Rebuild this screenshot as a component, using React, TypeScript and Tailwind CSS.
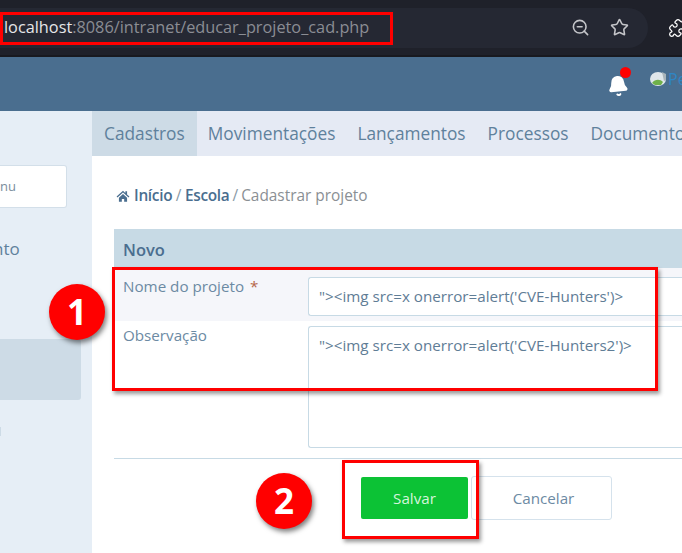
import React from "react";
import { Bell, Star, ZoomOut, Puzzle } from "lucide-react";

const font = { fontFamily: '"Open Sans", sans-serif' };

function Tab({ label, active }: { label: string; active?: boolean }) {
  return (
    <div
      className={`flex h-full items-center text-[17.3px] whitespace-nowrap text-[#5f819c] ${
        active ? "bg-[#cddbe6] px-[12px]" : "px-[11px]"
      }`}
    >
      {label}
    </div>
  );
}

function Marker({ n, className }: { n: string; className: string }) {
  return (
    <div
      className={`absolute flex h-[56px] w-[56px] items-center justify-center rounded-full bg-[#ff0000] text-[35px] font-bold text-white shadow-[2px_3px_5px_rgba(0,0,0,0.5)] ${className}`}
    >
      {n}
    </div>
  );
}

export default function App() {
  return (
    <div className="relative h-[553px] w-[682px] overflow-hidden bg-white" style={font}>
      {/* browser toolbar */}
      <div className="flex h-[57px] items-center border-b-2 border-[#18191f] bg-[#1f212a]">
        <div className="flex h-[40px] w-[648px] shrink-0 items-center justify-between rounded-r-[20px] bg-[#252833] pl-[4px]">
          <div className="text-[16.3px] whitespace-nowrap text-[#8b8d94]">
            <span className="text-[#e6e6e8]">localhost</span>:8086/intranet/educar_projeto_cad.php
          </div>
          <div className="mr-[19px] flex items-center gap-[20px] text-[#c4c5c9]">
            <ZoomOut className="h-[19px] w-[19px]" />
            <Star className="h-[19px] w-[19px]" />
          </div>
        </div>
        <Puzzle className="ml-[20px] h-[20px] w-[20px] shrink-0 text-white" strokeWidth={1.5} />
      </div>

      {/* app header */}
      <div className="flex h-[54px] items-center justify-end bg-[#4a6e8f]">
        <div className="relative mr-[21px] mt-[4px]">
          <Bell className="h-[22px] w-[22px] -rotate-6 fill-white text-white" />
          <span className="absolute -right-[2px] -top-[8px] h-[11px] w-[11px] rounded-full bg-[#ff0000]" />
        </div>
        <div className="mb-[10px] flex w-[32px] shrink-0 items-center overflow-hidden">
          <svg viewBox="0 0 18 17" className="h-[17px] w-[18px] shrink-0">
            <ellipse cx="8" cy="8" rx="8" ry="7" fill="#dfe6ea" />
            <path d="M2 12c3-4 8-4 11-1l-2 3H5Z" fill="#6fb04a" />
            <path d="M12 1l4 2v6l-2 1Z" fill="#a9b4ba" />
          </svg>
          <span className="text-[16px] text-[#2f86c4]">Pe</span>
        </div>
      </div>

      <div className="flex h-[442px]">
        {/* sidebar */}
        <div className="flex w-[92px] shrink-0 flex-col bg-[#e6eef6] text-[#5f819c]">
          <div className="mr-[25px] mt-[54px] flex h-[43px] items-center rounded-r-[3px] border border-l-0 border-[#d3dfe9] bg-white text-[13px] text-[#7a8d9d]">
            nu
          </div>
          <div className="ml-[-7px] mt-[28px] text-[17px]">nto</div>
          <div className="mr-[11px] mt-[77px] h-[61px] rounded-r-[3px] bg-[#cddbe6]" />
          <div className="mt-[27px] h-[9px] w-[1px] bg-[#cddbe6]" />
        </div>

        <div className="min-w-0 flex-1 overflow-hidden">
          {/* tabs */}
          <div className="flex h-[45px] bg-[#e5eaf4]">
            <Tab label="Cadastros" active />
            <Tab label="Movimentações" />
            <Tab label="Lançamentos" />
            <Tab label="Processos" />
            <Tab label="Documentos" />
          </div>

          <div className="pl-[22px]">
            {/* breadcrumb */}
            <div className="mt-[30px] flex h-[20px] items-center text-[15.4px] whitespace-nowrap">
              <svg viewBox="0 0 24 24" className="ml-[2px] mr-[4px] h-[14px] w-[14px] fill-[#4a6e8f]">
                <path d="M12 3 1 13l1.500 1.600L12 6l9.500 8.600L23 13l-4-3.600V4h-3v2.700L12 3Zm-7 12v7h5v-5h4v5h5v-7l-7-6.300L5 15Z" />
              </svg>
              <span className="font-semibold tracking-[-0.3px] text-[#4a6e8f]">Início</span>
              <span className="mx-[3.5px] text-[#8a9aa6]">/</span>
              <span className="font-semibold tracking-[-0.3px] text-[#4a6e8f]">Escola</span>
              <span className="mx-[3px] text-[#8a9aa6]">/</span>
              <span className="text-[#8a8f94]">Cadastrar projeto</span>
            </div>

            {/* form */}
            <div className="mt-[23px] w-[568px]">
              <div className="flex h-[39px] items-center bg-[#c7dae5] pl-[9px] pt-[3px] text-[16.5px] font-semibold text-[#4a6e8f]">
                Novo
              </div>
              <div className="flex h-[53px] bg-[#f5f6fa] pl-[9px]">
                <div className="w-[185px] shrink-0 pt-[7px] text-[15.2px] whitespace-nowrap text-[#6c8aa3]">
                  Nome do projeto <span className="ml-[2px] text-[#b5664a]">*</span>
                </div>
                <div className="mt-[9px] flex h-[39px] flex-1 items-center rounded-l-[3px] border border-r-0 border-[#c7dae5] bg-white pl-[10px] text-[15.2px] whitespace-nowrap text-[#5f7d96]">
                  "&gt;&lt;img src=x onerror=alert('CVE-Hunters')&gt;
                </div>
              </div>
              <div className="flex h-[138px] border-b border-[#c7dae5] pl-[9px]">
                <div className="w-[185px] shrink-0 pt-[3px] text-[15.2px] text-[#6c8aa3]">Observação</div>
                <div className="mt-[5px] h-[122px] flex-1 rounded-l-[3px] border border-r-0 border-[#c7dae5] bg-white pl-[10px] pt-[7px] text-[15.2px] whitespace-nowrap text-[#5f7d96]">
                  "&gt;&lt;img src=x onerror=alert('CVE-Hunters2')&gt;
                </div>
              </div>
            </div>

            {/* actions */}
            <div className="mt-[17px] flex pl-[247px]">
              <div className="mt-[1px] flex h-[42px] w-[107px] items-center justify-center rounded-[2px] bg-[#0cc235] text-[15.2px] text-[#d5f5dc]">
                Salvar
              </div>
              <div className="ml-[3px] flex h-[44px] w-[141px] items-center justify-center rounded-[3px] border border-[#d5e2ec] pl-[4px] text-[15.2px] text-[#6c8aa3]">
                Cancelar
              </div>
            </div>
          </div>
        </div>
      </div>

      {/* screenshot annotations */}
      <div className="absolute left-0 top-[12px] h-[33px] w-[393px] border-[3px] border-[#ff0000]" />
      <div className="absolute left-[112px] top-[267px] h-[124px] w-[546px] border-[3px] border-[#ff0000] shadow-[2px_3px_4px_rgba(0,0,0,0.4)]" />
      <div className="absolute left-[342px] top-[460px] h-[79px] w-[137px] border-[3px] border-[#ff0000] shadow-[2px_3px_4px_rgba(0,0,0,0.4)]" />
      <Marker n="1" className="left-[49px] top-[284px]" />
      <Marker n="2" className="left-[256px] top-[473px]" />
    </div>
  );
}
